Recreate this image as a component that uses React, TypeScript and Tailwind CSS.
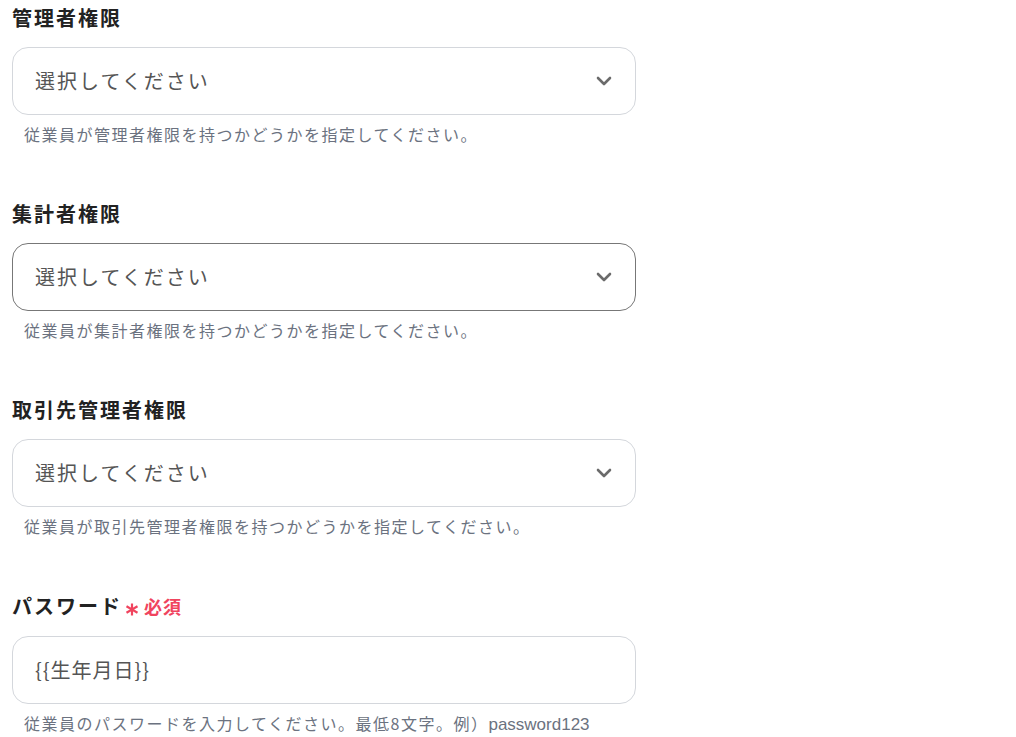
import { ReactNode } from "react";

function Chevron() {
  return (
    <svg width="16" height="10" viewBox="0 0 16 10" fill="none" className="text-[#6b6b6b]">
      <path d="M2 2l6 6 6-6" stroke="currentColor" strokeWidth="2.6" strokeLinecap="round" strokeLinejoin="round" />
    </svg>
  );
}

function Asterisk() {
  return (
    <svg width="14" height="13" viewBox="0 0 14 13" className="text-[#f0445e]">
      <g stroke="currentColor" strokeWidth="2.2" strokeLinecap="butt">
        <path d="M7 0.5v12" />
        <path d="M1.5 3.3l11 6.4" />
        <path d="M12.5 3.3l-11 6.4" />
      </g>
    </svg>
  );
}

function Label({ children }: { children: ReactNode }) {
  return <div className="h-[30px] flex items-center text-[20px] font-bold tracking-[2px] text-[#222] mb-[14px]">{children}</div>;
}

function Help({ children }: { children: ReactNode }) {
  return <p className="mt-[7px] pl-[12px] h-[24px] leading-[24px] text-[16px] tracking-[1.5px] text-[#6b7280]">{children}</p>;
}

function SelectField({ label, help, active }: { label: string; help: string; active?: boolean }) {
  return (
    <div className="h-[196px]">
      <Label>{label}</Label>
      <div className={`w-[624px] h-[68px] rounded-[16px] border bg-white flex items-center justify-between pl-[22px] pr-[23px] ${active ? "border-[#777]" : "border-[#d4d7dc]"}`}>
        <span className="text-[20px] tracking-[2px] text-[#555]">選択してください</span>
        <Chevron />
      </div>
      <Help>{help}</Help>
    </div>
  );
}

export default function App() {
  return (
    <div className="w-[1016px] h-[737px] bg-white pt-[3px] pl-[12px] overflow-hidden" style={{ fontFamily: '"Noto Sans CJK JP", "Noto Sans", sans-serif' }}>
      <SelectField label="管理者権限" help="従業員が管理者権限を持つかどうかを指定してください。" />
      <SelectField label="集計者権限" help="従業員が集計者権限を持つかどうかを指定してください。" active />
      <SelectField label="取引先管理者権限" help="従業員が取引先管理者権限を持つかどうかを指定してください。" />
      <div>
        <div className="h-[30px] flex items-center mb-[15px]">
          <span className="text-[20px] font-bold tracking-[2px] text-[#222]">パスワード</span>
          <span className="mt-[7px] ml-[3px]"><Asterisk /></span>
          <span className="text-[18px] font-bold text-[#f0445e] ml-[5px] tracking-[1px]">必須</span>
        </div>
        <div className="w-[624px] h-[68px] rounded-[16px] border border-[#d4d7dc] bg-white flex items-center pl-[22px]">
          <span className="text-[20px] tracking-[1px] text-[#555]">{"{{生年月日}}"}</span>
        </div>
        <Help>
          従業員のパスワードを入力してください。最低8文字。例）
          <span className="tracking-normal text-[17px]" style={{ fontFamily: '"Liberation Sans", sans-serif' }}>password123</span>
        </Help>
      </div>
    </div>
  );
}
